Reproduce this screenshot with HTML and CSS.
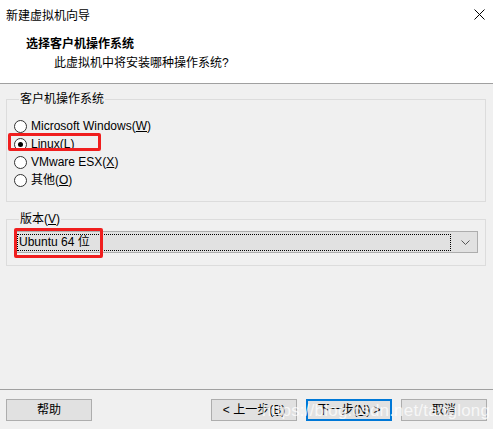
FILE: index.html
```html
<!doctype html>
<html lang="zh-CN">
    <head>
        <meta charset="UTF-8" />
        <title>新建虚拟机向导</title>
        <link rel="stylesheet" href="styles.css">
    </head>
    <body>
        <div class="window">
            <div class="header">
                <div class="titlebar">
                    <span class="title">新建虚拟机向导</span>
                    <svg class="close" width="11" height="11" viewBox="0 0 11 11">
                        <path d="M0.5 0.5 L10.5 10.5 M10.5 0.5 L0.5 10.5" stroke="#000" stroke-width="1" fill="none" />
                    </svg>
                </div>
                <h1>选择客户机操作系统</h1>
                <p>此虚拟机中将安装哪种操作系统?</p>
            </div>

            <div class="content">
                <fieldset class="group">
                    <legend>客户机操作系统</legend>
                    <label class="radio"><span class="dot"></span><span>Microsoft Windows(<u>W</u>)</span></label>
                    <label class="radio"><span class="dot checked"></span><span>Linux(<u>L</u>)</span></label>
                    <label class="radio"><span class="dot"></span><span>VMware ESX(<u>X</u>)</span></label>
                    <label class="radio"><span class="dot"></span><span>其他(<u>O</u>)</span></label>
                </fieldset>

                <fieldset class="group version">
                    <legend>版本(<u>V</u>)</legend>
                    <div class="combo">
                        <div class="combo-value">Ubuntu 64 位</div>
                        <svg class="combo-arrow" width="9" height="5" viewBox="0 0 9 5">
                            <path d="M0.5 0.5 L4.5 4.5 L8.5 0.5" stroke="#555" stroke-width="1" fill="none" />
                        </svg>
                    </div>
                </fieldset>
            </div>

            <div class="footer">
                <button class="btn">帮助</button>
                <div class="nav">
                    <button class="btn">&lt; 上一步(<u>B</u>)</button>
                    <button class="btn primary">下一步(<u>N</u>) &gt;</button>
                    <button class="btn">取消</button>
                </div>
            </div>

            <!-- 标注框和水印 -->
            <div class="mark mark-linux"></div>
            <div class="mark mark-combo"></div>
            <div class="watermark">https://blog.csdn.net/tanglong</div>
        </div>
    </body>
</html>
```

FILE: styles.css
```css
body {
    margin: 0;
    font-family: "Liberation Sans", "Noto Sans CJK SC", sans-serif;
    font-size: 12px;
    color: #000;
    background: #f0f0f0;
}

.window {
    position: relative;
    width: 493px;
    height: 429px;
    background: #f0f0f0;
    display: flex;
    flex-direction: column;
    overflow: hidden;
}

.header {
    background: #fff;
    height: 83px;
    border-bottom: 1px solid #a0a0a0;
}

.titlebar {
    display: flex;
    justify-content: space-between;
    align-items: center;
    height: 32px;
    padding: 0 8px 0 6px;
}

.title {
    line-height: 16px;
    margin-top: -1px;
}

.close {
    margin-top: -3px;
}

.header h1 {
    margin: 3px 0 0 26px;
    font-size: 12px;
    font-weight: bold;
    line-height: 18px;
}

.header p {
    margin: 1px 0 0 54px;
    line-height: 18px;
}

.content {
    flex: 1;
    padding: 7px 7px 0 6px;
}

.group {
    margin: 0;
    border: 1px solid #dcdcdc;
    padding: 10px 7px 12px 7px;
    display: flex;
    flex-direction: column;
}

.group legend {
    padding: 0 1px;
    margin-left: 5px;
    line-height: 16px;
}

.radio {
    display: flex;
    align-items: center;
    gap: 4px;
    height: 18px;
    line-height: 18px;
}

.dot {
    width: 11px;
    height: 11px;
    border: 1px solid #333;
    border-radius: 50%;
    background: #fff;
    position: relative;
    flex-shrink: 0;
}

.dot.checked::after {
    content: "";
    position: absolute;
    left: 3px;
    top: 3px;
    width: 5px;
    height: 5px;
    border-radius: 50%;
    background: #000;
}

.version {
    margin-top: 9px;
    padding: 4px 7px 12px 7px;
}

.combo {
    display: flex;
    align-items: center;
    height: 20px;
    border: 1px solid #adadad;
    background: #e1e1e1;
    padding: 0 3px 0 2px;
}

.combo-value {
    flex: 1;
    height: 15px;
    line-height: 15px;
    border: 1px dotted #000;
    padding: 0 1px;
    margin-right: 10px;
}

.combo-arrow {
    margin-right: 4px;
}

.footer {
    display: flex;
    justify-content: space-between;
    border-top: 1px solid #a0a0a0;
    padding: 9px 6px 8px 6px;
}

.nav {
    display: flex;
    gap: 9px;
}

.btn {
    width: 86px;
    height: 22px;
    font: inherit;
    line-height: 18px;
    background: #e1e1e1;
    border: 1px solid #adadad;
    padding: 0;
    color: #000;
}

.btn.primary {
    border: 2px solid #0078d7;
}

.mark {
    position: absolute;
    border: 3px solid #f01e1e;
    border-radius: 2px;
}

.mark-linux {
    left: 8px;
    top: 133px;
    width: 87px;
    height: 12px;
}

.mark-combo {
    left: 14px;
    top: 228px;
    width: 83px;
    height: 24px;
}

.watermark {
    position: absolute;
    left: 262px;
    top: 401px;
    font-family: "Liberation Sans", sans-serif;
    font-size: 17px;
    color: rgba(255, 255, 255, 0.75);
    letter-spacing: 0.2px;
}
```
